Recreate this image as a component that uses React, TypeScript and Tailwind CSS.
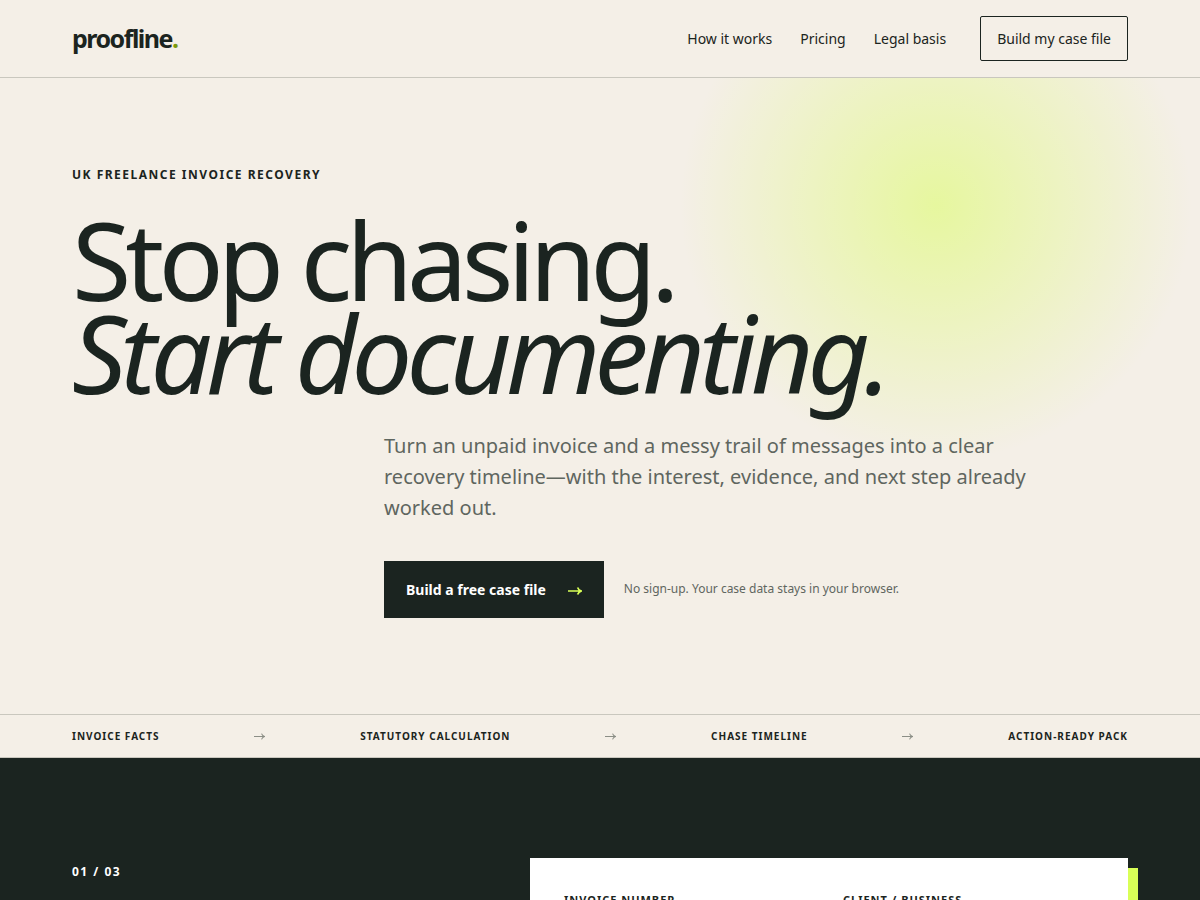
import { Fragment } from 'react'

const navLinks = [
  { label: 'How it works', href: '#how' },
  { label: 'Pricing', href: '#pricing' },
  { label: 'Legal basis', href: '#legal' },
]

const steps = [
  'Invoice facts',
  'Statutory calculation',
  'Chase timeline',
  'Action-ready pack',
]

const fields = [
  { id: 'invoice-number', label: 'Invoice number' },
  { id: 'client', label: 'Client / business' },
]

const Arrow = ({ className }: { className: string }) => (
  <svg
    viewBox="0 0 14 8"
    fill="none"
    stroke="currentColor"
    aria-hidden="true"
    className={className}
  >
    <path d="M0 4h13M9.6 0.4C10.2 2.2 11.4 3.4 13.4 4C11.4 4.6 10.2 5.8 9.6 7.6" />
  </svg>
)

const Header = () => (
  <header className="flex items-center justify-between border-b border-[#c9c7be] px-18 py-4">
    <a
      href="#top"
      className="pb-0.5 text-[25px] leading-8 font-bold tracking-[-0.06em]"
    >
      proofline<span className="text-[#7c9a0c]">.</span>
    </a>
    <nav className="flex items-center gap-7 text-sm">
      {navLinks.map((link) => (
        <a key={link.href} href={link.href}>
          {link.label}
        </a>
      ))}
      <a
        href="#case"
        className="ml-1.5 rounded-xs border border-[#1b2420] px-4 py-3 leading-[19px]"
      >
        Build my case file
      </a>
    </nav>
  </header>
)

const Hero = () => (
  <section className="bg-[radial-gradient(circle_at_78%_20%,#d9ff5780_0,transparent_24%)] px-18 pt-[87px] pb-24">
    <p className="text-xs leading-5 font-bold tracking-[0.125em] uppercase">
      UK freelance invoice recovery
    </p>
    <h1 className="mt-7 text-[108px] leading-[93px] tracking-[-0.055em]">
      Stop chasing.
      <br />
      <em>Start documenting.</em>
    </h1>
    <div className="mt-[31px] ml-78">
      <p className="max-w-[650px] text-xl leading-[31px] text-[#5f665f]">
        Turn an unpaid invoice and a messy trail of messages into a clear
        recovery timeline—with the interest, evidence, and next step already
        worked out.
      </p>
      <div className="mt-[38px] flex items-center gap-5">
        <a
          href="#case"
          className="flex items-center gap-[22px] bg-[#1b2420] px-[22px] py-4 text-sm leading-[25px] font-bold text-white"
        >
          Build a free case file
          <Arrow className="mt-0.5 h-2 w-3.5 stroke-[1.7] text-[#d9ff57]" />
        </a>
        <span className="pb-0.5 text-xs text-[#5f665f]">
          No sign-up. Your case data stays in your browser.
        </span>
      </div>
    </div>
  </section>
)

const StepStrip = () => (
  <div className="flex items-center justify-between border-y border-[#c9c7be] px-18 py-3.5 text-[10px] leading-[14px] font-bold tracking-[0.1em] uppercase">
    {steps.map((step, i) => (
      <Fragment key={step}>
        {i > 0 && (
          <Arrow className="mr-px h-[7px] w-[11px] stroke-[1.3] text-[#8b8e86]" />
        )}
        <span>{step}</span>
      </Fragment>
    ))}
  </div>
)

const CaseBuilder = () => (
  <section
    id="case"
    className="grid grid-cols-[386fr_598fr] gap-18 bg-[#1b2420] px-18 py-25"
  >
    <p className="pt-1 text-xs leading-5 font-bold tracking-[0.125em] text-white">
      01 / 03
    </p>
    <form className="grid grid-cols-2 gap-7 bg-white p-[34px] shadow-[10px_10px_0_#d9ff57]">
      {fields.map((field) => (
        <div key={field.id} className="flex flex-col gap-2">
          <label
            htmlFor={field.id}
            className="text-[11px] leading-4 font-bold tracking-[0.09em] uppercase"
          >
            {field.label}
          </label>
          <input
            id={field.id}
            type="text"
            className="h-12 w-full border border-[#c9c7be] px-3 text-sm"
          />
        </div>
      ))}
    </form>
  </section>
)

const App = () => (
  <div
    id="top"
    className="bg-[#f4efe7] font-['Noto_Sans',sans-serif] text-[#1b2420]"
  >
    <Header />
    <main>
      <Hero />
      <StepStrip />
      <CaseBuilder />
    </main>
  </div>
)

export default App
